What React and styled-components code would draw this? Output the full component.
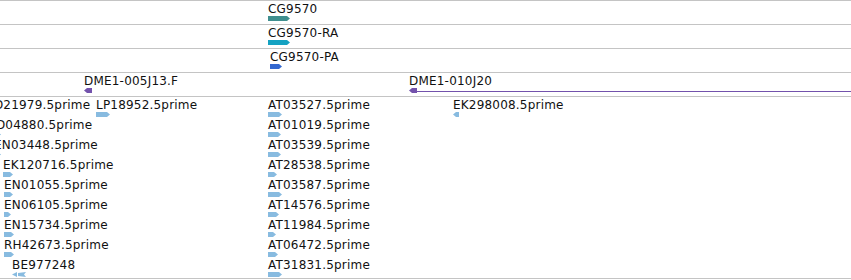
import React from 'react';
import styled, { createGlobalStyle } from 'styled-components';

const GlobalStyle = createGlobalStyle`
  html, body {
    margin: 0;
    padding: 0;
    background: #fff;
  }
  body {
    font-family: 'DejaVu Sans', 'Liberation Sans', sans-serif;
  }
`;

const colors = {
  gene: '#3f8f8f',
  mrna: '#14a2c2',
  cds: '#3368d0',
  clone: '#7352ac',
  est: '#88bbe0',
};

const genes = [
  { name: 'CG9570', x: 268, w: 22, color: colors.gene },
  { name: 'CG9570-RA', x: 268, w: 22, color: colors.mrna },
  { name: 'CG9570-PA', x: 270, w: 12, color: colors.cds },
];

// est rows, left to right; dir -1 points left
const estRows = [
  [
    { name: 'LD21979.5prime', x: -13, w: 12 },
    { name: 'LP18952.5prime', x: 96, w: 14 },
    { name: 'AT03527.5prime', x: 268, w: 14 },
    { name: 'EK298008.5prime', x: 453, w: 6, dir: -1 },
  ],
  [
    { name: 'LD04880.5prime', x: -11, w: 12 },
    { name: 'AT01019.5prime', x: 268, w: 13 },
  ],
  [
    { name: 'EN03448.5prime', x: -6, w: 7 },
    { name: 'AT03539.5prime', x: 268, w: 13 },
  ],
  [
    { name: 'EK120716.5prime', x: 3, w: 10 },
    { name: 'AT28538.5prime', x: 268, w: 9 },
  ],
  [
    { name: 'EN01055.5prime', x: 4, w: 9 },
    { name: 'AT03587.5prime', x: 268, w: 14 },
  ],
  [
    { name: 'EN06105.5prime', x: 4, w: 7 },
    { name: 'AT14576.5prime', x: 268, w: 11 },
  ],
  [
    { name: 'EN15734.5prime', x: 4, w: 10 },
    { name: 'AT11984.5prime', x: 268, w: 8 },
  ],
  [
    { name: 'RH42673.5prime', x: 4, w: 10 },
    { name: 'AT06472.5prime', x: 268, w: 10 },
  ],
  [
    { name: 'BE977248', x: 12, w: 14, dir: -1, split: true },
    { name: 'AT31831.5prime', x: 268, w: 14 },
  ],
];

const View = styled.div`
  width: 851px;
  height: 280px;
  overflow: hidden;
  background: #fff;
`;

const Track = styled.div`
  position: relative;
  height: ${(p) => p.$height}px;
  border-top: 1px solid #c4c4c4;
  border-bottom: ${(p) => (p.$last ? '1px solid #c4c4c4' : 'none')};
  overflow: hidden;
`;

const Row = styled.div`
  position: relative;
  height: 20px;
`;

const Feature = styled.div`
  position: absolute;
  top: 0;
  left: ${(p) => p.$x}px;
  display: flex;
  flex-direction: column;
  align-items: flex-start;
`;

const Label = styled.span`
  padding-top: 1px;
  font-size: 12px;
  line-height: 14px;
  letter-spacing: 0.2px;
  color: #111;
  white-space: nowrap;
`;

const GlyphSvg = styled.svg`
  display: block;
  flex: none;
`;

const Glyph = ({ w, h = 5, color, dir = 1, split }) => {
  const t = Math.min(3, w / 2);
  let shape;
  if (split) {
    shape = (
      <>
        <polygon points={`0,${h / 2} 5,0 5,${h}`} fill={color} />
        <polygon points={`6,1 ${w},0 ${w - 2},${h / 2} ${w},${h} 6,${h - 1}`} fill={color} />
      </>
    );
  } else if (dir > 0) {
    shape = (
      <polygon
        points={`0,0 ${w - t},0 ${w},${h / 2} ${w - t},${h} 0,${h}`}
        fill={color}
      />
    );
  } else {
    shape = (
      <polygon
        points={`0,${h / 2} ${t},0 ${w},0 ${w},${h} ${t},${h}`}
        fill={color}
      />
    );
  }
  return (
    <GlyphSvg width={w} height={h} viewBox={`0 0 ${w} ${h}`}>
      {shape}
    </GlyphSvg>
  );
};

const SpanGlyph = ({ w, color }) => (
  <GlyphSvg width={w} height={5} viewBox={`0 0 ${w} 5`}>
    <polygon points="0,2.5 3,0 8,0 8,5 3,5" fill={color} />
    <line x1="8" y1="3.5" x2={w} y2="3.5" stroke={color} strokeWidth="1" />
  </GlyphSvg>
);

const App = () => {
  return (
    <View>
      <GlobalStyle />
      {genes.map((g) => (
        <Track key={g.name} $height={23}>
          <Feature $x={g.x}>
            <Label>{g.name}</Label>
            <Glyph w={g.w} color={g.color} />
          </Feature>
        </Track>
      ))}
      <Track $height={23}>
        <Feature $x={84}>
          <Label>DME1-005J13.F</Label>
          <Glyph w={8} color={colors.clone} dir={-1} />
        </Feature>
        <Feature $x={409}>
          <Label>DME1-010J20</Label>
          <SpanGlyph w={442} color={colors.clone} />
        </Feature>
      </Track>
      <Track $height={181} $last>
        {estRows.map((row, i) => (
          <Row key={i}>
            {row.map((f) => (
              <Feature key={f.name} $x={f.x}>
                <Label>{f.name}</Label>
                <Glyph w={f.w} color={colors.est} dir={f.dir} split={f.split} />
              </Feature>
            ))}
          </Row>
        ))}
      </Track>
    </View>
  );
};

export default App;
